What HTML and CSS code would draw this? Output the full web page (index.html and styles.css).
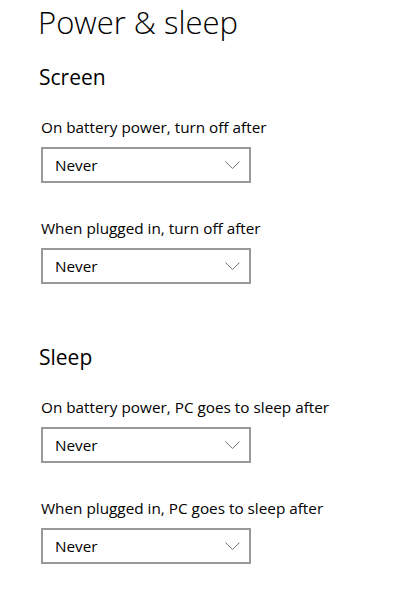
FILE: index.html
```html
<!DOCTYPE html>
<html lang="en">

<head>
    <meta charset="UTF-8">
    <meta name="viewport" content="width=device-width, initial-scale=1.0">
    <title>Power &amp; sleep</title>
    <link rel="stylesheet" href="styles.css">
</head>

<body>
    <div class="page">
        <h1>Power &amp; sleep</h1>

        <section class="group">
            <h2>Screen</h2>
            <div class="setting">
                <label>On battery power, turn off after</label>
                <div class="dropdown">
                    <span>Never</span>
                    <svg class="chevron" width="15" height="8" viewBox="0 0 15 8"><path d="M0.5 0.5l7 7 7-7" fill="none" stroke="#777" stroke-width="1"/></svg>
                </div>
            </div>
            <div class="setting">
                <label>When plugged in, turn off after</label>
                <div class="dropdown">
                    <span>Never</span>
                    <svg class="chevron" width="15" height="8" viewBox="0 0 15 8"><path d="M0.5 0.5l7 7 7-7" fill="none" stroke="#777" stroke-width="1"/></svg>
                </div>
            </div>
        </section>

        <section class="group">
            <h2>Sleep</h2>
            <div class="setting">
                <label>On battery power, PC goes to sleep after</label>
                <div class="dropdown">
                    <span>Never</span>
                    <svg class="chevron" width="15" height="8" viewBox="0 0 15 8"><path d="M0.5 0.5l7 7 7-7" fill="none" stroke="#777" stroke-width="1"/></svg>
                </div>
            </div>
            <div class="setting">
                <label>When plugged in, PC goes to sleep after</label>
                <div class="dropdown">
                    <span>Never</span>
                    <svg class="chevron" width="15" height="8" viewBox="0 0 15 8"><path d="M0.5 0.5l7 7 7-7" fill="none" stroke="#777" stroke-width="1"/></svg>
                </div>
            </div>
        </section>
    </div>
</body>

</html>
```

FILE: styles.css
```css
* {
    margin: 0;
    padding: 0;
    box-sizing: border-box;
}

body {
    font-family: 'Open Sans', 'Noto Sans', sans-serif;
    background: #fff;
    color: #000;
}

.page {
    padding: 2px 0 0 38px;
}

h1 {
    font-size: 31px;
    font-weight: 300;
    line-height: 40px;
}

.group {
    margin-top: 21px;
}

.group + .group {
    margin-top: 59px;
}

h2 {
    font-size: 21px;
    font-weight: 400;
    line-height: 28px;
    padding-left: 1px;
}

.setting {
    margin-top: 26px;
}

.setting + .setting {
    margin-top: 35px;
}

label {
    display: block;
    font-size: 15.3px;
    line-height: 21px;
    padding-left: 3px;
}

.dropdown {
    margin: 9px 0 0 3px;
    width: 210px;
    height: 36px;
    border: 2px solid #999;
    display: flex;
    align-items: center;
    justify-content: space-between;
    padding: 0 9px 0 12px;
    font-size: 15.3px;
}

.chevron {
    display: block;
}
```
